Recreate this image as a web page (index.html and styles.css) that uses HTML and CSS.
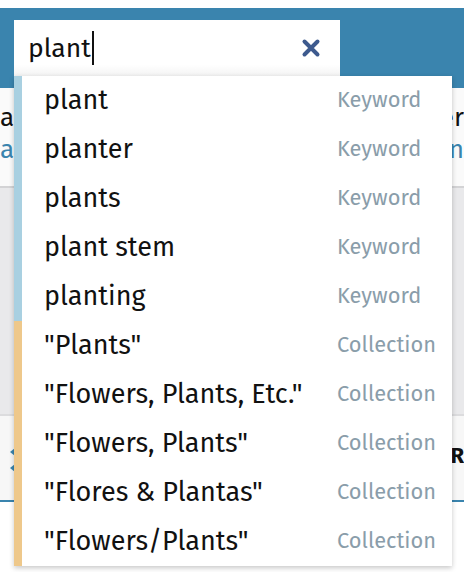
FILE: index.html
```html
<!DOCTYPE html>
<html>
<head>
<meta charset="utf-8">
<link rel="stylesheet" href="styles.css">
</head>
<body>
<div class="top-gap"></div>
<header class="bar">
  <div class="search">
    <div class="input">
      <span class="query">plant</span><span class="caret"></span>
      <svg class="clear" viewBox="0 0 20 20" width="20" height="20" aria-hidden="true">
        <path d="M3.5 3.5 L16.5 16.5 M16.5 3.5 L3.5 16.5" stroke="#3d5a8e" stroke-width="4" stroke-linecap="round"/>
      </svg>
    </div>
    <ul class="dropdown">
      <li class="row kw"><span class="term">plant</span><span class="type">Keyword</span></li>
      <li class="row kw"><span class="term">planter</span><span class="type">Keyword</span></li>
      <li class="row kw"><span class="term">plants</span><span class="type">Keyword</span></li>
      <li class="row kw"><span class="term">plant stem</span><span class="type">Keyword</span></li>
      <li class="row kw"><span class="term">planting</span><span class="type">Keyword</span></li>
      <li class="row col"><span class="term">"Plants"</span><span class="type">Collection</span></li>
      <li class="row col"><span class="term">"Flowers, Plants, Etc."</span><span class="type">Collection</span></li>
      <li class="row col"><span class="term">"Flowers, Plants"</span><span class="type">Collection</span></li>
      <li class="row col"><span class="term">"Flores &amp; Plantas"</span><span class="type">Collection</span></li>
      <li class="row col"><span class="term">"Flowers/Plants"</span><span class="type">Collection</span></li>
    </ul>
  </div>
</header>
<main class="page">
  <section class="intro">
    <div class="line dark"><span class="l">a</span><span class="r">er</span></div>
    <div class="line link"><span class="l">a</span><span class="r">n</span></div>
  </section>
  <section class="panel"></section>
  <section class="tabs">
    <div class="arrows">
      <span class="arrow"></span>
      <span class="arrow"></span>
    </div>
    <span class="tab-r">R</span>
  </section>
  <section class="rest"></section>
</main>
</body>
</html>
```
FILE: styles.css
```css
* { box-sizing: border-box; }
html, body { margin: 0; padding: 0; }
body {
  width: 464px;
  height: 572px;
  overflow: hidden;
  background: #fff;
  font-family: "Fira Sans", "Open Sans", "Noto Sans", sans-serif;
  color: #111;
}
.top-gap { height: 8px; }
.bar {
  background: #3a84ae;
  height: 80px;
  padding: 12px 0 0 14px;
}
.search {
  position: relative;
  width: 326px;
}
.input {
  height: 56px;
  background: linear-gradient(#fff 0, #fff 80%, #f3f3f3 100%);
  display: flex;
  align-items: center;
  padding: 0 14px;
  font-size: 26.5px;
}
.query { line-height: 34px; }
.caret {
  width: 2px;
  height: 34px;
  background: #111;
  margin-left: 1px;
}
.clear { margin-left: auto; margin-right: 5px; }
.dropdown {
  position: absolute;
  top: 56px;
  left: 0;
  width: 438px;
  margin: 0;
  padding: 0;
  list-style: none;
  background: #fff;
  box-shadow: 0 2px 5px rgba(0,0,0,0.22);
  z-index: 5;
}
.row {
  height: 49px;
  display: grid;
  grid-template-columns: 293px 1fr;
  align-items: center;
  padding-left: 22px;
  border-left: 8px solid #a9d0e1;
  line-height: 49px;
}
.row.col { border-left-color: #eec88b; }
.term { font-size: 27px; color: #111; white-space: nowrap; }
.type { font-size: 21.8px; color: #8a9daa; }
.intro {
  height: 98px;
  background: #fafafa;
  padding-top: 14px;
}
.line {
  display: flex;
  justify-content: space-between;
  font-size: 26px;
  line-height: 32px;
}
.line.dark { color: #111; }
.line.link { color: #3a84ae; }
.panel {
  height: 230px;
  background: #e9e9eb;
  border-top: 2px solid #d3d3d5;
  border-bottom: 2px solid #dcdcde;
}
.tabs {
  height: 86px;
  background: #f7f7f7;
  border-bottom: 2px solid #3a84ae;
  display: flex;
  justify-content: space-between;
  align-items: flex-start;
  padding-top: 26px;
}
.arrows {
  display: flex;
  flex-direction: column;
  gap: 8px;
  padding-left: 10px;
  padding-top: 6px;
}
.arrow {
  width: 0;
  height: 0;
  border-top: 4px solid transparent;
  border-bottom: 4px solid transparent;
  border-right: 5px solid #3a84ae;
}
.tab-r {
  font-weight: 700;
  font-size: 22px;
}
.rest { height: 80px; background: #fff; }
```
